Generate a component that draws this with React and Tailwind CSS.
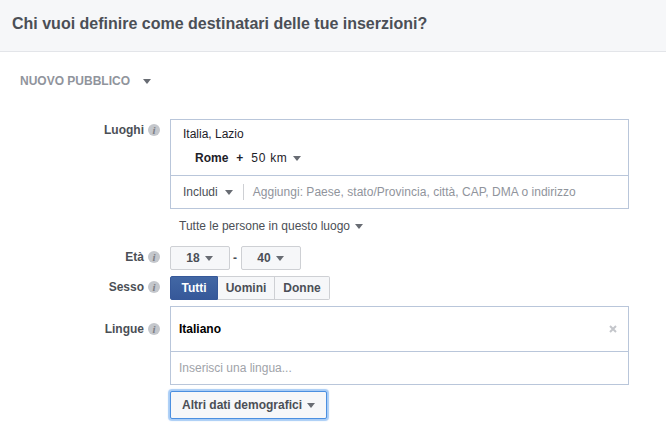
const Caret = ({ className = '' }) => (
  <span className={`inline-block h-0 w-0 border-x-[4.5px] border-t-[5px] border-x-transparent border-t-[#686c73] ${className}`} />
);

const Info = () => (
  <span className="flex h-3 w-3 items-center justify-center rounded-full bg-[#c4c7cc] font-['Liberation_Serif',serif] text-[11px] font-bold italic leading-none text-[#7d8086]">
    i
  </span>
);

const Label = ({ children, className = '' }) => (
  <div className={`flex w-[160px] shrink-0 items-center justify-end gap-1 ${className}`}>
    <span className="text-xs font-bold text-[#4b4f56]">{children}</span>
    <Info />
  </div>
);

const AgeSelect = ({ value }) => (
  <button className="flex h-[24px] w-[60px] items-center justify-center gap-[5px] rounded-[2px] border border-[#ced0d4] bg-[#f6f7f9] pr-[1px] text-xs font-bold text-[#4b4f56]">
    {value}
    <Caret />
  </button>
);

const App = () => {
  return (
    <div className="h-[435px] w-[666px] overflow-hidden bg-white font-['Liberation_Sans',Arial,sans-serif]">
      <header className="flex h-[52px] items-center border-b border-[#e3e5e9] bg-[#f6f7f9] px-3 pb-[3px]">
        <h1 className="text-base font-bold text-[#4b4f56]">Chi vuoi definire come destinatari delle tue inserzioni?</h1>
      </header>

      <div className="mt-[21px] flex items-center gap-[13px] pl-5">
        <span className="text-xs font-bold text-[#90949c]">NUOVO PUBBLICO</span>
        <Caret />
      </div>

      <div className="mt-[30px] flex">
        <Label className="h-[22px]">Luoghi</Label>
        <div className="ml-[10px] flex h-[90px] w-[459px] flex-col border border-[#b9c6da]">
          <div className="h-[56px] border-b border-[#b9c6da] pl-3 pt-[6px] text-xs text-[#1d2129]">
            <div>Italia, Lazio</div>
            <div className="mt-[8px] flex items-center pl-3">
              <span className="font-bold">Rome</span>
              <span className="ml-2 font-bold">+</span>
              <span className="ml-2 tracking-[0.7px]">50 km</span>
              <Caret className="ml-[5px]" />
            </div>
          </div>
          <div className="flex flex-1 items-center pl-3 text-xs">
            <span className="text-[#4b4f56]">Includi</span>
            <Caret className="ml-[7px]" />
            <span className="ml-[10px] h-4 w-px bg-[#ced0d4]" />
            <span className="ml-[9px] tracking-[0.03px] text-[#90949c]">Aggiungi: Paese, stato/Provincia, città, CAP, DMA o indirizzo</span>
          </div>
        </div>
      </div>

      <div className="mt-[9px] flex items-center gap-[5px] pl-[179px] text-xs text-[#4b4f56]">
        Tutte le persone in questo luogo
        <Caret />
      </div>

      <div className="mt-[12px] flex">
        <Label className="h-[22px]">Età</Label>
        <div className="ml-[10px] flex items-center">
          <AgeSelect value="18" />
          <span className="ml-[3px] mr-1 text-xs font-bold text-[#4b4f56]">-</span>
          <AgeSelect value="40" />
        </div>
      </div>

      <div className="mt-[6px] flex">
        <Label className="h-[22px]">Sesso</Label>
        <div className="ml-[10px] flex text-xs font-bold">
          <button className="h-[24px] w-[48px] rounded-l-[2px] border border-[#365899] bg-gradient-to-b from-[#4267a4] to-[#365899] text-white">Tutti</button>
          <button className="h-[24px] w-[57px] border-y border-r border-[#ced0d4] bg-[#f6f7f9] text-[#4b4f56]">Uomini</button>
          <button className="h-[24px] w-[55px] rounded-r-[2px] border-y border-r border-[#ced0d4] bg-[#f6f7f9] text-[#4b4f56]">Donne</button>
        </div>
      </div>

      <div className="mt-[6px] flex">
        <Label className="h-[46px]">Lingue</Label>
        <div className="ml-[10px] flex h-[79px] w-[459px] flex-col border border-[#b9c6da]">
          <div className="flex h-[45px] items-center justify-between border-b border-[#b9c6da] pl-2 pr-[11px]">
            <span className="text-xs font-bold text-black">Italiano</span>
            <svg width="8" height="8" viewBox="0 0 8 8" className="text-[#c4c6cb]">
              <path d="M1 1l6 6M7 1L1 7" stroke="currentColor" strokeWidth="2" />
            </svg>
          </div>
          <div className="flex flex-1 items-center pl-2 text-xs text-[#a0a3a9]">Inserisci una lingua...</div>
        </div>
      </div>

      <div className="ml-[170px] mt-[6px]">
        <button className="flex h-[28px] w-[157px] items-center justify-center gap-[5px] rounded-[2px] border border-[#4b8fe0] bg-[#f6f7f9] text-xs font-bold text-[#4b4f56] shadow-[0_0_1px_2px_rgba(110,170,240,0.6)]">
          Altri dati demografici
          <Caret />
        </button>
      </div>
    </div>
  );
};

export default App;
